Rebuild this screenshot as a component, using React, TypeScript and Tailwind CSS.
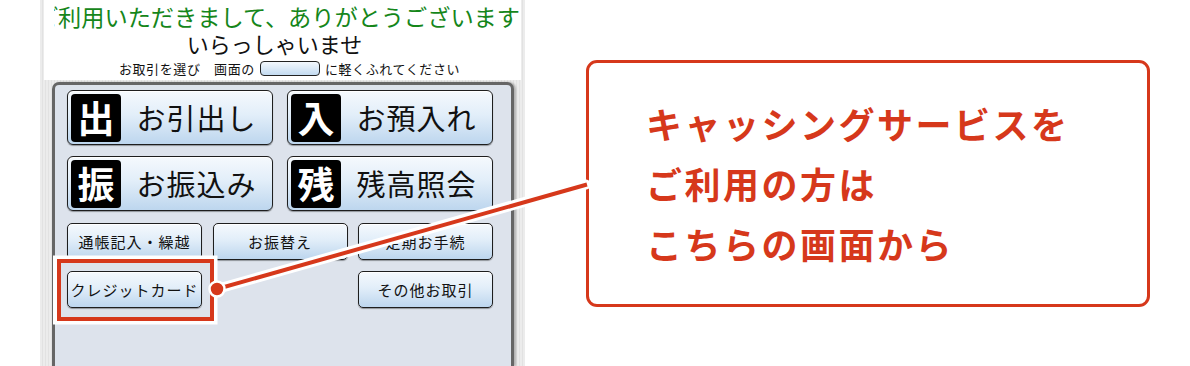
import React from "react";

const FONT = "font-['Noto_Sans_CJK_JP','Noto_Sans',sans-serif]";

const btnBase =
  "border-[1.5px] border-[#1e1e1e] rounded-[5px] bg-[linear-gradient(to_bottom,#f5f9fd_0%,#e2eef9_45%,#bdd6ee_100%)] shadow-[inset_0_1px_0_#ffffff,0_1px_1px_rgba(0,0,0,0.35)]";

function BigButton({ icon, label }: { icon: string; label: string }) {
  return (
    <div className={`${btnBase} h-[55px] flex items-center pl-[3px] rounded-[6px]`}>
      <div className="w-[50px] h-[48px] bg-black rounded-[4px] flex items-center justify-center text-white text-[37px] font-bold leading-none">
        {icon}
      </div>
      <div className="flex-1 flex justify-center text-[29px] leading-none tracking-[1px] text-[#111]">
        {label}
      </div>
    </div>
  );
}

function SmallButton({ label }: { label: string }) {
  return (
    <div className={`${btnBase} h-[37px] flex items-center justify-center text-[15px] tracking-[1px] text-[#111] leading-none`}>
      {label}
    </div>
  );
}

export default function App() {
  return (
    <div className={`${FONT} relative w-[1190px] h-[366px] bg-white overflow-hidden flex`}>
      {/* ATM screen column */}
      <div className="ml-[40px] w-[485px] h-full flex flex-col bg-[repeating-linear-gradient(90deg,#ececec_0px,#ececec_2px,#e2e2e2_2px,#e2e2e2_3px)]">
        {/* header */}
        <div className="mx-[4px] h-[80px] bg-white flex flex-col">
          <div className="ml-[10px] h-[31px] overflow-hidden flex justify-end items-center pr-[1px]">
            <span className="whitespace-nowrap text-[23.2px] leading-none text-[#15861a] pt-[2px]">
              ご利用いただきまして、ありがとうございます
            </span>
          </div>
          <div className="h-[24px] flex justify-center items-center text-[22px] leading-none text-[#111] pr-[16px]">
            いらっしゃいませ
          </div>
          <div className="flex-1 flex justify-center items-center text-[13px] tracking-[0.6px] leading-none text-[#111] pl-[14px] pt-[2px]">
            <span>お取引を選び　画面の</span>
            <span className="mx-[5px] w-[60px] h-[15px] rounded-[4px] border-[1.5px] border-[#222] bg-[linear-gradient(to_bottom,#f3f8fd,#c3dbf1)]" />
            <span>に軽くふれてください</span>
          </div>
        </div>
        {/* panel */}
        <div className="mt-[2px] ml-[12px] mr-[11px] flex-1 rounded-t-[7px] border-[3px] border-b-0 border-[#666666] bg-[#dde3ec] shadow-[2px_0_2px_rgba(0,0,0,0.25)] pt-[5px] pl-[12px]">
          <div className="w-[426px] grid grid-cols-2 gap-x-[14px] gap-y-[11px]">
            <BigButton icon="出" label="お引出し" />
            <BigButton icon="入" label="お預入れ" />
            <BigButton icon="振" label="お振込み" />
            <BigButton icon="残" label="残高照会" />
          </div>
          <div className="mt-[12px] w-[426px] grid grid-cols-3 gap-x-[10.5px] gap-y-[11px]">
            <SmallButton label="通帳記入・繰越" />
            <SmallButton label="お振替え" />
            <SmallButton label="定期お手続" />
            <SmallButton label="クレジットカード" />
            <div />
            <SmallButton label="その他お取引" />
          </div>
        </div>
      </div>

      {/* callout box */}
      <div className="ml-[61px] mt-[60px] w-[564px] h-[247px] rounded-[11px] border-[3px] border-[#d6381b] bg-white flex flex-col justify-center pl-[57px] pb-[2px]">
        <div className="text-[36px] leading-[60px] font-bold tracking-[2.5px] text-[#d6381b]">
          <div>キャッシングサービスを</div>
          <div>ご利用の方は</div>
          <div>こちらの画面から</div>
        </div>
      </div>

      {/* annotation overlay */}
      <svg className="absolute left-0 top-0 pointer-events-none" width="1190" height="366">
        <rect x="55" y="257.5" width="160.5" height="65" fill="none" stroke="#ffffff" strokeWidth="4" />
        <line x1="217" y1="289" x2="586" y2="184.5" stroke="#ffffff" strokeWidth="10" strokeLinecap="round" />
        <rect x="59" y="261" width="153" height="58" fill="none" stroke="#d6381b" strokeWidth="4" />
        <line x1="217" y1="289" x2="587" y2="184.5" stroke="#d6381b" strokeWidth="4" />
        <circle cx="217" cy="289" r="7.5" fill="#d6381b" stroke="#ffffff" strokeWidth="2.5" />
      </svg>
    </div>
  );
}
